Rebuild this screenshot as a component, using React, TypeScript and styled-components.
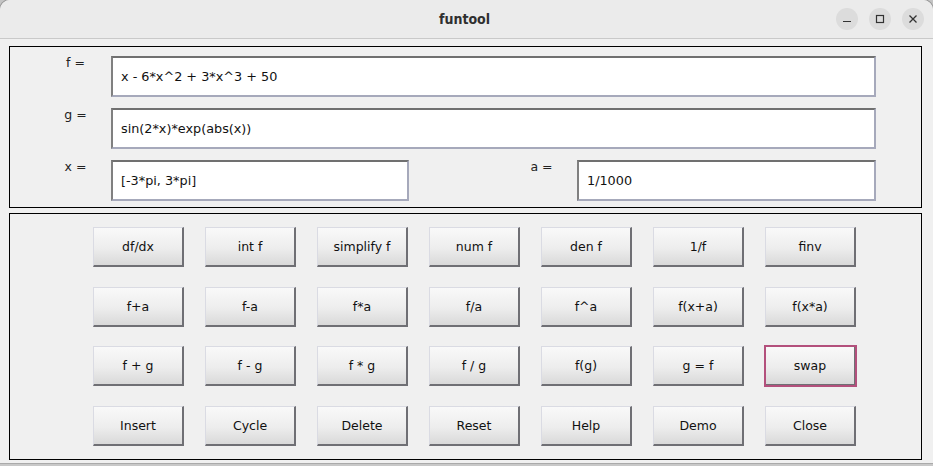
import React from "react";
import styled, { createGlobalStyle } from "styled-components";

const Global = createGlobalStyle`
  html, body { margin: 0; padding: 0; background: #bdbdbd; }
  body { width: 933px; height: 466px; overflow: hidden; font-family: "Liberation Sans", Arial, sans-serif; }
`;

const Screen = styled.div`
  width: 933px;
  height: 466px;
  display: flex;
  flex-direction: column;
  background: #c4c4c4;
`;

const Window = styled.div`
  height: 463px;
  display: flex;
  flex-direction: column;
  background: #f0f0f0;
  border-radius: 10px 10px 0 0;
  overflow: hidden;
  box-shadow: 0 0 0 1px #9a9a9a;
`;

const TitleBar = styled.div`
  height: 38px;
  flex: none;
  display: grid;
  grid-template-columns: 1fr auto 1fr;
  align-items: center;
  background: #ebebeb;
  border-bottom: 1px solid #c9c9c9;
`;

const Title = styled.div`
  grid-column: 2;
  font-family: "DejaVu Sans Condensed", "DejaVu Sans", sans-serif;
  font-weight: bold;
  font-size: 14px;
  color: #2f2f2f;
  padding-right: 4px;
`;

const WinButtons = styled.div`
  grid-column: 3;
  justify-self: end;
  display: flex;
  gap: 11px;
  padding-right: 9px;
`;

const WinButton = styled.div`
  width: 22px;
  height: 22px;
  border-radius: 50%;
  background: #dcdcdc;
  display: flex;
  align-items: center;
  justify-content: center;
`;

const Body = styled.div`
  flex: 1;
  display: flex;
  flex-direction: column;
  gap: 5px;
  padding: 7px 11px 0 9px;
`;

const Panel = styled.div<{ $h: number }>`
  height: ${(p) => p.$h}px;
  box-sizing: border-box;
  border: 1px solid #000;
`;

const FieldPanel = styled(Panel)`
  display: flex;
  flex-direction: column;
  gap: 11px;
  padding: 9px 45px 0 30px;
`;

const FieldRow = styled.div`
  display: flex;
  align-items: flex-start;
`;

const Label = styled.div<{ $gapBefore?: number }>`
  width: 71px;
  margin-left: ${(p) => p.$gapBefore ?? 0}px;
  text-align: center;
  font-family: "DejaVu Sans", sans-serif;
  font-size: 12.5px;
  color: #222;
  line-height: 14px;
`;

const Input = styled.div<{ $w?: number }>`
  box-sizing: border-box;
  height: 41px;
  width: ${(p) => (p.$w ? `${p.$w}px` : "auto")};
  flex: ${(p) => (p.$w ? "none" : "1")};
  background: #fff;
  border: 2px solid #a6a9bb;
  border-top-color: #707070;
  border-left-color: #808080;
  display: flex;
  align-items: center;
  padding-left: 8px;
  font-family: "DejaVu Sans", sans-serif;
  font-size: 12.8px;
  color: #111;
`;

const ButtonPanel = styled(Panel)`
  display: grid;
  grid-template-columns: repeat(7, 91px);
  grid-auto-rows: 40px;
  column-gap: 21px;
  row-gap: 19.7px;
  padding: 13px 0 0 83px;
`;

const Btn = styled.button<{ $focused?: boolean }>`
  box-sizing: border-box;
  margin: 0;
  padding: 0;
  font-family: "DejaVu Sans", sans-serif;
  font-size: 12.5px;
  color: #111;
  background: linear-gradient(#f9f9f9, #ededed 55%, #d9d9d9);
  border: 1px solid #dadbe3;
  border-right: 2px solid #6f6f74;
  border-bottom: 2px solid #6f6f74;
  outline: ${(p) => (p.$focused ? "2px solid #b3507c" : "none")};
  outline-offset: -1px;
  cursor: default;
`;

const Bottom = styled.div`
  flex: 1;
  background: linear-gradient(#8c8c8c, #c8c8c8 1px);
`;

const rows = [
  ["df/dx", "int f", "simplify f", "num f", "den f", "1/f", "finv"],
  ["f+a", "f-a", "f*a", "f/a", "f^a", "f(x+a)", "f(x*a)"],
  ["f + g", "f - g", "f * g", "f / g", "f(g)", "g = f", "swap"],
  ["Insert", "Cycle", "Delete", "Reset", "Help", "Demo", "Close"],
];

export default function App() {
  return (
    <>
      <Global />
      <Screen>
        <Window>
          <TitleBar>
            <Title>funtool</Title>
            <WinButtons>
              <WinButton>
                <svg width="10" height="10" viewBox="0 0 10 10">
                  <path d="M1 7.5h8" stroke="#333" strokeWidth="1.2" />
                </svg>
              </WinButton>
              <WinButton>
                <svg width="10" height="10" viewBox="0 0 10 10">
                  <rect x="1.5" y="1.5" width="7" height="7" fill="none" stroke="#333" strokeWidth="1.2" />
                </svg>
              </WinButton>
              <WinButton>
                <svg width="10" height="10" viewBox="0 0 10 10">
                  <path d="M1.5 1.5l7 7M8.5 1.5l-7 7" stroke="#333" strokeWidth="1.3" />
                </svg>
              </WinButton>
            </WinButtons>
          </TitleBar>
          <Body>
            <FieldPanel $h={162}>
              <FieldRow>
                <Label>f =</Label>
                <Input>x - 6*x^2 + 3*x^3 + 50</Input>
              </FieldRow>
              <FieldRow>
                <Label>g =</Label>
                <Input>sin(2*x)*exp(abs(x))</Input>
              </FieldRow>
              <FieldRow>
                <Label>x =</Label>
                <Input $w={298}>[-3*pi, 3*pi]</Input>
                <Label $gapBefore={97}>a =</Label>
                <Input>1/1000</Input>
              </FieldRow>
            </FieldPanel>
            <ButtonPanel $h={247}>
              {rows.flat().map((t) => (
                <Btn key={t} $focused={t === "swap"}>
                  {t}
                </Btn>
              ))}
            </ButtonPanel>
          </Body>
        </Window>
        <Bottom />
      </Screen>
    </>
  );
}
